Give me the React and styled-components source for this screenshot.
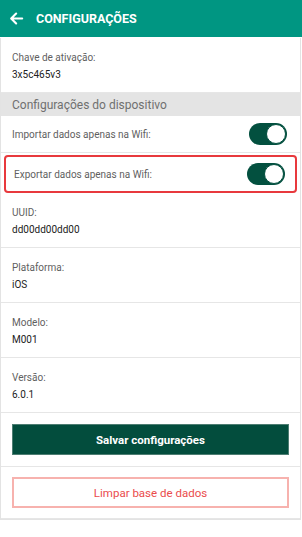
import React, { useState } from "react";
import styled, { createGlobalStyle } from "styled-components";

const GlobalStyle = createGlobalStyle`
  html, body {
    margin: 0;
    padding: 0;
    background: #ffffff;
    font-family: Roboto, "Noto Sans", sans-serif;
  }
  * { box-sizing: border-box; }
`;

export default function App() {
  const [importWifi, setImportWifi] = useState(true);
  const [exportWifi, setExportWifi] = useState(true);

  return (
    <>
      <GlobalStyle />
      <StyledPage>
        <StyledHeader>
          <StyledBack aria-label="Voltar">
            <svg width="17" height="17" viewBox="0 0 24 24" fill="none">
              <path
                d="M20 12H5M11.5 5L4.5 12l7 7"
                stroke="#fff"
                strokeWidth="3"
                strokeLinecap="round"
                strokeLinejoin="round"
              />
            </svg>
          </StyledBack>
          <StyledTitle>Configurações</StyledTitle>
        </StyledHeader>

        <StyledCard>
          <StyledInfoRow>
            <StyledLabel>Chave de ativação:</StyledLabel>
            <StyledValue>3x5c465v3</StyledValue>
          </StyledInfoRow>

          <StyledSection>Configurações do dispositivo</StyledSection>

          <StyledToggleRow>
            <StyledLabel>Importar dados apenas na Wifi:</StyledLabel>
            <Toggle on={importWifi} onClick={() => setImportWifi(!importWifi)} />
          </StyledToggleRow>

          <StyledToggleRow $highlight>
            <StyledLabel>Exportar dados apenas na Wifi:</StyledLabel>
            <Toggle on={exportWifi} onClick={() => setExportWifi(!exportWifi)} />
          </StyledToggleRow>

          <StyledInfoRow>
            <StyledLabel>UUID:</StyledLabel>
            <StyledValue>dd00dd00dd00</StyledValue>
          </StyledInfoRow>
          <StyledInfoRow>
            <StyledLabel>Plataforma:</StyledLabel>
            <StyledValue>iOS</StyledValue>
          </StyledInfoRow>
          <StyledInfoRow>
            <StyledLabel>Modelo:</StyledLabel>
            <StyledValue>M001</StyledValue>
          </StyledInfoRow>
          <StyledInfoRow>
            <StyledLabel>Versão:</StyledLabel>
            <StyledValue>6.0.1</StyledValue>
          </StyledInfoRow>

          <StyledButtonRow>
            <StyledButton>Salvar configurações</StyledButton>
          </StyledButtonRow>
          <StyledButtonRow>
            <StyledButton $danger>Limpar base de dados</StyledButton>
          </StyledButtonRow>
        </StyledCard>
      </StyledPage>
    </>
  );
}

function Toggle({ on, onClick }) {
  return (
    <StyledToggle $on={on} onClick={onClick} role="switch" aria-checked={on}>
      <StyledKnob $on={on} />
    </StyledToggle>
  );
}

const StyledPage = styled.div`
  width: 302px;
  min-height: 537px;
  background: #fff;
`;

const StyledHeader = styled.header`
  display: flex;
  align-items: center;
  height: 37px;
  padding: 0 0 0 8px;
  background: #009682;
  color: #fff;
`;

const StyledBack = styled.div`
  display: flex;
  align-items: center;
  width: 28px;
`;

const StyledTitle = styled.h1`
  margin: 0;
  font-size: 12.5px;
  font-weight: 700;
  text-transform: uppercase;
`;

const StyledCard = styled.div`
  margin: 1px 1px 0 0;
  border: 1px solid #e3e3e3;
  border-top: none;
`;

const StyledInfoRow = styled.div`
  display: flex;
  flex-direction: column;
  justify-content: center;
  gap: 6px;
  height: 55px;
  padding: 2px 11px 0;
  border-bottom: 1px solid #e6e6e6;
`;

const StyledLabel = styled.span`
  font-size: 10px;
  color: #5f5f5f;
`;

const StyledValue = styled.span`
  font-size: 10px;
  color: #222;
`;

const StyledSection = styled.div`
  display: flex;
  align-items: center;
  height: 23px;
  padding: 0 11px;
  background: #e4e4e4;
  font-size: 12px;
  color: #707070;
`;

const StyledToggleRow = styled.div`
  display: flex;
  align-items: center;
  justify-content: space-between;
  height: ${(p) => (p.$highlight ? "38px" : "37px")};
  margin: ${(p) => (p.$highlight ? "2px 3px 0" : "0")};
  padding: ${(p) => (p.$highlight ? "0 10px 0 8px" : "0 13px 0 11px")};
  border: ${(p) => (p.$highlight ? "2px solid #e8393d" : "none")};
  border-bottom: ${(p) =>
    p.$highlight ? "2px solid #e8393d" : "1px solid #e6e6e6"};
  border-radius: ${(p) => (p.$highlight ? "4px" : "0")};
`;

const StyledToggle = styled.div`
  position: relative;
  width: 38px;
  height: 22px;
  border-radius: 11px;
  background: ${(p) => (p.$on ? "#03503f" : "#c8c8c8")};
  cursor: pointer;
`;

const StyledKnob = styled.div`
  position: absolute;
  top: 1px;
  left: ${(p) => (p.$on ? "17px" : "1px")};
  width: 20px;
  height: 20px;
  border-radius: 50%;
  background: #fff;
  border: 1.5px solid #03503f;
`;

const StyledButtonRow = styled.div`
  display: flex;
  align-items: center;
  height: 54px;
  padding: 0 11px;
  border-bottom: 1px solid #e6e6e6;

  &:last-child {
    height: 52px;
  }
`;

const StyledButton = styled.button`
  width: 100%;
  height: 31px;
  border: 1px solid ${(p) => (p.$danger ? "#f7b2ae" : "#4d7d72")};
  border-width: ${(p) => (p.$danger ? "2px" : "1px")};
  background: ${(p) => (p.$danger ? "#fff" : "#034d3d")};
  color: ${(p) => (p.$danger ? "#ea4c4c" : "#fff")};
  font-family: Roboto, "Noto Sans", sans-serif;
  font-size: 11.5px;
  font-weight: ${(p) => (p.$danger ? 400 : 700)};
  cursor: pointer;
`;
